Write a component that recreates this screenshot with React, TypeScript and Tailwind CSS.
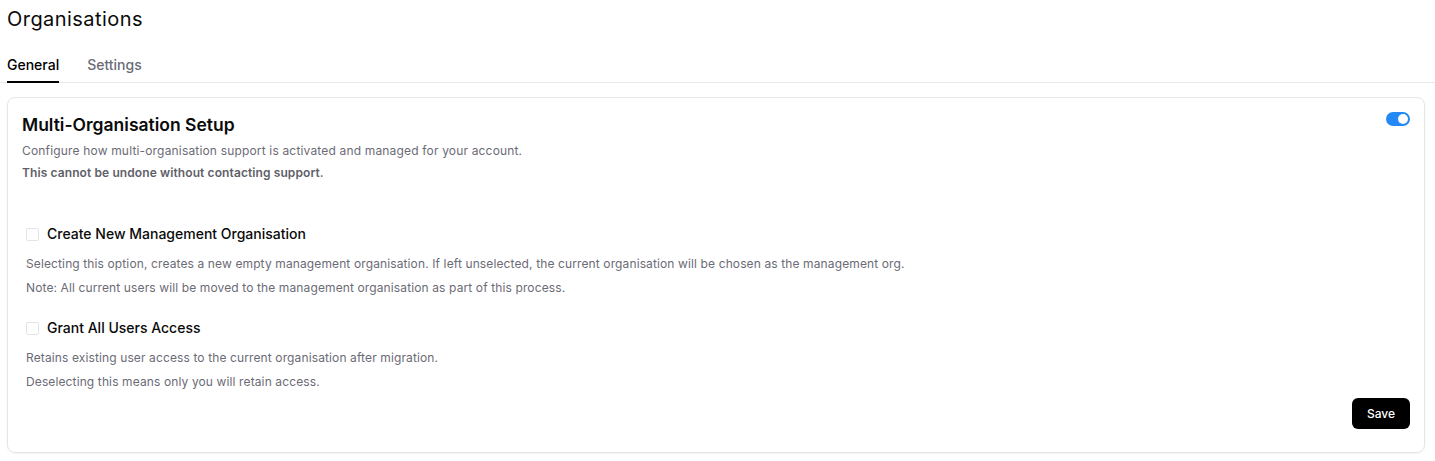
import React from 'react';

type Option = {
  label: string;
  lines: string[];
};

const options: Option[] = [
  {
    label: 'Create New Management Organisation',
    lines: [
      'Selecting this option, creates a new empty management organisation. If left unselected, the current organisation will be chosen as the management org.',
      'Note: All current users will be moved to the management organisation as part of this process.',
    ],
  },
  {
    label: 'Grant All Users Access',
    lines: [
      'Retains existing user access to the current organisation after migration.',
      'Deselecting this means only you will retain access.',
    ],
  },
];

function Toggle() {
  return (
    <button
      type="button"
      className="mt-px flex h-[14px] w-[24px] items-center justify-end rounded-full bg-[#2489f4] px-[2px]"
    >
      <span className="block h-[10px] w-[10px] rounded-full bg-white" />
    </button>
  );
}

export default function App() {
  return (
    <div className="min-h-screen bg-white font-['Inter',sans-serif] text-[#0a0a0a]">
      <h1 className="pl-[7px] pt-[5px] text-xl leading-7 font-normal tracking-[0.45px]">Organisations</h1>

      <div className="mt-[22px] flex gap-7 border-b border-[#e8e8ec] pl-[7px]">
        <button className="-mb-px border-b-2 border-black pb-[6px] text-sm leading-5 font-medium text-black">
          General
        </button>
        <button className="-mb-px border-b-2 border-transparent pb-[6px] text-sm leading-5 font-medium text-[#6b6b76]">
          Settings
        </button>
      </div>

      <div className="ml-[7px] mr-[10px] mt-[14px] rounded-lg border border-[#e6e6ea] px-[14px] pt-[13px] pb-[23px] shadow-[0_1px_2px_rgba(0,0,0,0.05)]">
        <div className="flex items-start justify-between">
          <h2 className="text-[17.5px] leading-7 font-semibold">Multi-Organisation Setup</h2>
          <Toggle />
        </div>
        <p className="mt-px text-xs leading-[22px] tracking-[0.17px] text-[#6b6b76]">
          Configure how multi-organisation support is activated and managed for your account.
        </p>
        <p className="text-xs leading-[22px] font-semibold tracking-[0.1px] text-[#5f5f6a]">
          This cannot be undone without contacting support.
        </p>

        <div className="mt-[40px] flex flex-col gap-[18px] px-1">
          {options.map((opt) => (
            <div key={opt.label}>
              <label className="flex items-center gap-2">
                <span className="block h-[13px] w-[13px] rounded-[2px] border border-[#e4e4e8] bg-white" />
                <span className="text-sm leading-5 font-medium text-[#0a0a0a]">{opt.label}</span>
              </label>
              <div className="mt-[8px]">
                {opt.lines.map((line) => (
                  <p key={line} className="text-xs leading-6 tracking-[0.12px] text-[#6b6b76]">
                    {line}
                  </p>
                ))}
              </div>
            </div>
          ))}
        </div>

        <div className="mt-[4px] flex justify-end">
          <button className="h-[31px] w-[58px] rounded-md bg-black text-xs font-medium text-white">
            Save
          </button>
        </div>
      </div>
    </div>
  );
}
